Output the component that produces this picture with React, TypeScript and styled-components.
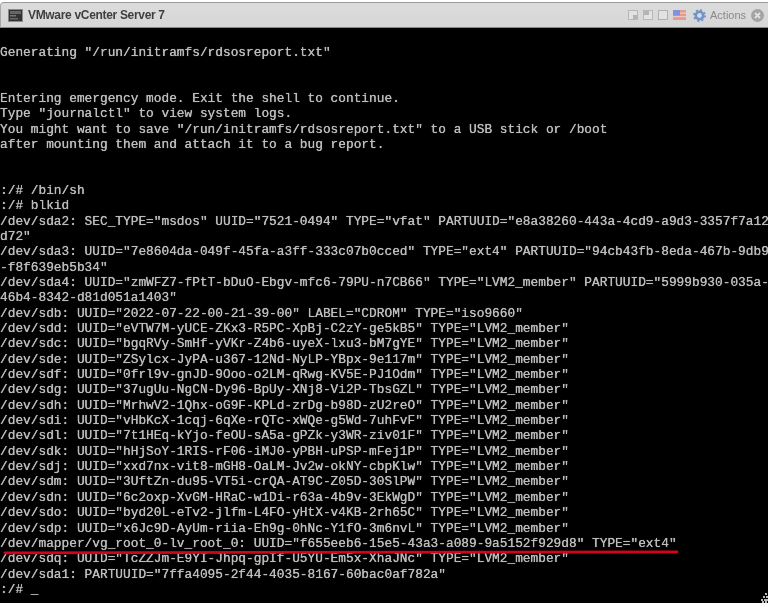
import React from "react";
import styled, { createGlobalStyle } from "styled-components";

const Global = createGlobalStyle`
  html, body { margin: 0; padding: 0; background: #fff; overflow: hidden; }
`;

const Page = styled.div`
  width: 768px;
  height: 603px;
  padding-top: 2px;
  box-sizing: border-box;
  display: flex;
  flex-direction: column;
  background: #fff;
`;

const TitleBar = styled.header`
  height: 26px;
  flex: none;
  box-sizing: border-box;
  display: flex;
  align-items: center;
  padding: 0 4px 0 7px;
  background: linear-gradient(#dcdcdc, #d6d6d6);
  border-top: 1px solid #9a9a9a;
  border-left: 1px solid #a8a8a8;
  border-bottom: 1px solid #8a8a8a;
  border-top-left-radius: 4px;
  font-family: "Liberation Sans", Arial, sans-serif;
`;

const AppIcon = styled.svg`
  width: 15px;
  height: 13px;
  flex: none;
  margin-right: 5px;
  filter: blur(0.4px);
`;

const Title = styled.h1`
  margin: 0;
  font-size: 12px;
  font-weight: 700;
  color: #3f3f3f;
  letter-spacing: -0.32px;
  flex: 1;
  filter: blur(0.35px);
`;

const Tools = styled.div`
  display: flex;
  align-items: center;
  filter: blur(0.5px);
`;

const ToolIcon = styled.svg`
  width: 10px;
  height: 10px;
  margin-right: 5px;
  flex: none;
`;

const Flag = styled.svg`
  width: 13px;
  height: 10px;
  margin-right: 7px;
  flex: none;
`;

const Gear = styled.svg`
  width: 13px;
  height: 13px;
  margin-right: 4px;
  flex: none;
`;

const Actions = styled.span`
  width: 34px;
  font-size: 11px;
  color: #8a8a8a;
  margin-right: 7px;
  white-space: nowrap;
`;

const CloseIcon = styled.svg`
  width: 13px;
  height: 13px;
  flex: none;
`;

const Console = styled.main`
  position: relative;
  flex: 1;
  background: #000;
  overflow: hidden;
  padding-top: 1.5px;
`;

const Output = styled.pre`
  margin: 0;
  font-family: "Liberation Mono", "DejaVu Sans Mono", monospace;
  font-size: 12.82px;
  line-height: 15.35px;
  color: #bcbcbc;
  white-space: pre;
  text-shadow: 0 0 0.7px #d8d8d8;
  filter: blur(0.3px);
`;

const Mark = styled.svg`
  position: absolute;
  left: 3px;
  top: 519px;
  width: 680px;
  height: 8px;
`;

const Dots = styled.svg`
  position: absolute;
  right: 0;
  bottom: 0;
  width: 8px;
  height: 11px;
`;

const text = `
Generating "/run/initramfs/rdsosreport.txt"


Entering emergency mode. Exit the shell to continue.
Type "journalctl" to view system logs.
You might want to save "/run/initramfs/rdsosreport.txt" to a USB stick or /boot
after mounting them and attach it to a bug report.


:/# /bin/sh
:/# blkid
/dev/sda2: SEC_TYPE="msdos" UUID="7521-0494" TYPE="vfat" PARTUUID="e8a38260-443a-4cd9-a9d3-3357f7a12
d72"
/dev/sda3: UUID="7e8604da-049f-45fa-a3ff-333c07b0cced" TYPE="ext4" PARTUUID="94cb43fb-8eda-467b-9db9
-f8f639eb5b34"
/dev/sda4: UUID="zmWFZ7-fPtT-bDuO-Ebgv-mfc6-79PU-n7CB66" TYPE="LVM2_member" PARTUUID="5999b930-035a-
46b4-8342-d81d051a1403"
/dev/sdb: UUID="2022-07-22-00-21-39-00" LABEL="CDROM" TYPE="iso9660"
/dev/sdd: UUID="eVTW7M-yUCE-ZKx3-R5PC-XpBj-C2zY-ge5kB5" TYPE="LVM2_member"
/dev/sdc: UUID="bgqRVy-SmHf-yVKr-Z4b6-uyeX-lxu3-bM7gYE" TYPE="LVM2_member"
/dev/sde: UUID="ZSylcx-JyPA-u367-12Nd-NyLP-YBpx-9e117m" TYPE="LVM2_member"
/dev/sdf: UUID="0frl9v-gnJD-9Ooo-o2LM-qRwg-KV5E-PJ1Odm" TYPE="LVM2_member"
/dev/sdg: UUID="37ugUu-NgCN-Dy96-BpUy-XNj8-Vi2P-TbsGZL" TYPE="LVM2_member"
/dev/sdh: UUID="MrhwV2-1Qhx-oG9F-KPLd-zrDg-b98D-zU2reO" TYPE="LVM2_member"
/dev/sdi: UUID="vHbKcX-1cqj-6qXe-rQTc-xWQe-g5Wd-7uhFvF" TYPE="LVM2_member"
/dev/sdl: UUID="7t1HEq-kYjo-feOU-sA5a-gPZk-y3WR-ziv01F" TYPE="LVM2_member"
/dev/sdk: UUID="hHjSoY-1RIS-rF06-iMJ0-yPBH-uPSP-mFej1P" TYPE="LVM2_member"
/dev/sdj: UUID="xxd7nx-vit8-mGH8-OaLM-Jv2w-okNY-cbpKlw" TYPE="LVM2_member"
/dev/sdm: UUID="3UftZn-du95-VT5i-crQA-AT9C-Z05D-30SlPW" TYPE="LVM2_member"
/dev/sdn: UUID="6c2oxp-XvGM-HRaC-w1Di-r63a-4b9v-3EkWgD" TYPE="LVM2_member"
/dev/sdo: UUID="byd20L-eTv2-jlfm-L4FO-yHtX-v4KB-2rh65C" TYPE="LVM2_member"
/dev/sdp: UUID="x6Jc9D-AyUm-riia-Eh9g-0hNc-Y1fO-3m6nvL" TYPE="LVM2_member"
/dev/mapper/vg_root_0-lv_root_0: UUID="f655eeb6-15e5-43a3-a089-9a5152f929d8" TYPE="ext4"
/dev/sdq: UUID="TcZZJm-E9YI-Jhpq-gpIf-U5YU-Em5x-XhaJNc" TYPE="LVM2_member"
/dev/sda1: PARTUUID="7ffa4095-2f44-4035-8167-60bac0af782a"
:/# _`;

export default function App() {
  return (
    <Page>
      <Global />
      <TitleBar>
        <AppIcon viewBox="0 0 15 13">
          <rect x="0.5" y="0.5" width="14" height="12" fill="#333" stroke="#8a8a8a" />
          <rect x="2" y="2" width="11" height="3" fill="#666" />
          <rect x="2" y="6" width="6" height="1.5" fill="#777" />
          <rect x="2" y="9" width="8" height="1.5" fill="#666" />
        </AppIcon>
        <Title>VMware vCenter Server 7</Title>
        <Tools>
          <ToolIcon viewBox="0 0 10 10">
            <rect x="0.5" y="0.5" width="9" height="9" fill="#e2e2e2" stroke="#b8b8b8" />
            <rect x="5" y="5" width="4" height="4" fill="#b4b4b4" />
          </ToolIcon>
          <ToolIcon viewBox="0 0 10 10">
            <rect x="0.5" y="0.5" width="9" height="9" fill="#e2e2e2" stroke="#b8b8b8" />
            <rect x="1" y="1" width="5" height="4" fill="#b4b4b4" />
          </ToolIcon>
          <ToolIcon viewBox="0 0 10 10">
            <rect x="0.5" y="0.5" width="9" height="9" fill="#e2e2e2" stroke="#b0b0b0" />
          </ToolIcon>
          <Flag viewBox="0 0 13 10">
            <rect width="13" height="10" fill="#e79a90" />
            <rect y="2.5" width="13" height="1.2" fill="#eec8c0" />
            <rect y="6" width="13" height="1.2" fill="#eec8c0" />
            <rect width="7" height="5.5" fill="#7f92dc" />
          </Flag>
          <Gear viewBox="0 0 14 14">
            <circle cx="7" cy="7" r="4" fill="none" stroke="#6f93c8" strokeWidth="2.8" />
            <circle cx="7" cy="7" r="6" fill="none" stroke="#6f93c8" strokeWidth="1.8" strokeDasharray="2.2 2.5" />
          </Gear>
          <Actions>Actions</Actions>
          <CloseIcon viewBox="0 0 13 13">
            <circle cx="6.5" cy="6.5" r="6.5" fill="#a4a4a4" />
            <path d="M4 4l5 5M9 4l-5 5" stroke="#e2e2e2" strokeWidth="1.8" />
          </CloseIcon>
        </Tools>
      </TitleBar>
      <Console>
        <Output>{text}</Output>
        <Mark viewBox="0 0 680 8">
          <path d="M2 5.8 L674 4.8" fill="none" stroke="#d3031f" strokeWidth="2.8" strokeLinecap="round" />
        </Mark>
        <Dots viewBox="0 0 8 11">
          <path d="M5 1h2v2H5zM3 4h2v2H3zM6 4h2v2H6zM1 7h2v2H1zM4 7h2v2H4zM6 7h2v2H6zM2 9h2v2H2zM5 9h2v2H5z" fill="#b8b8b8" />
        </Dots>
      </Console>
    </Page>
  );
}
